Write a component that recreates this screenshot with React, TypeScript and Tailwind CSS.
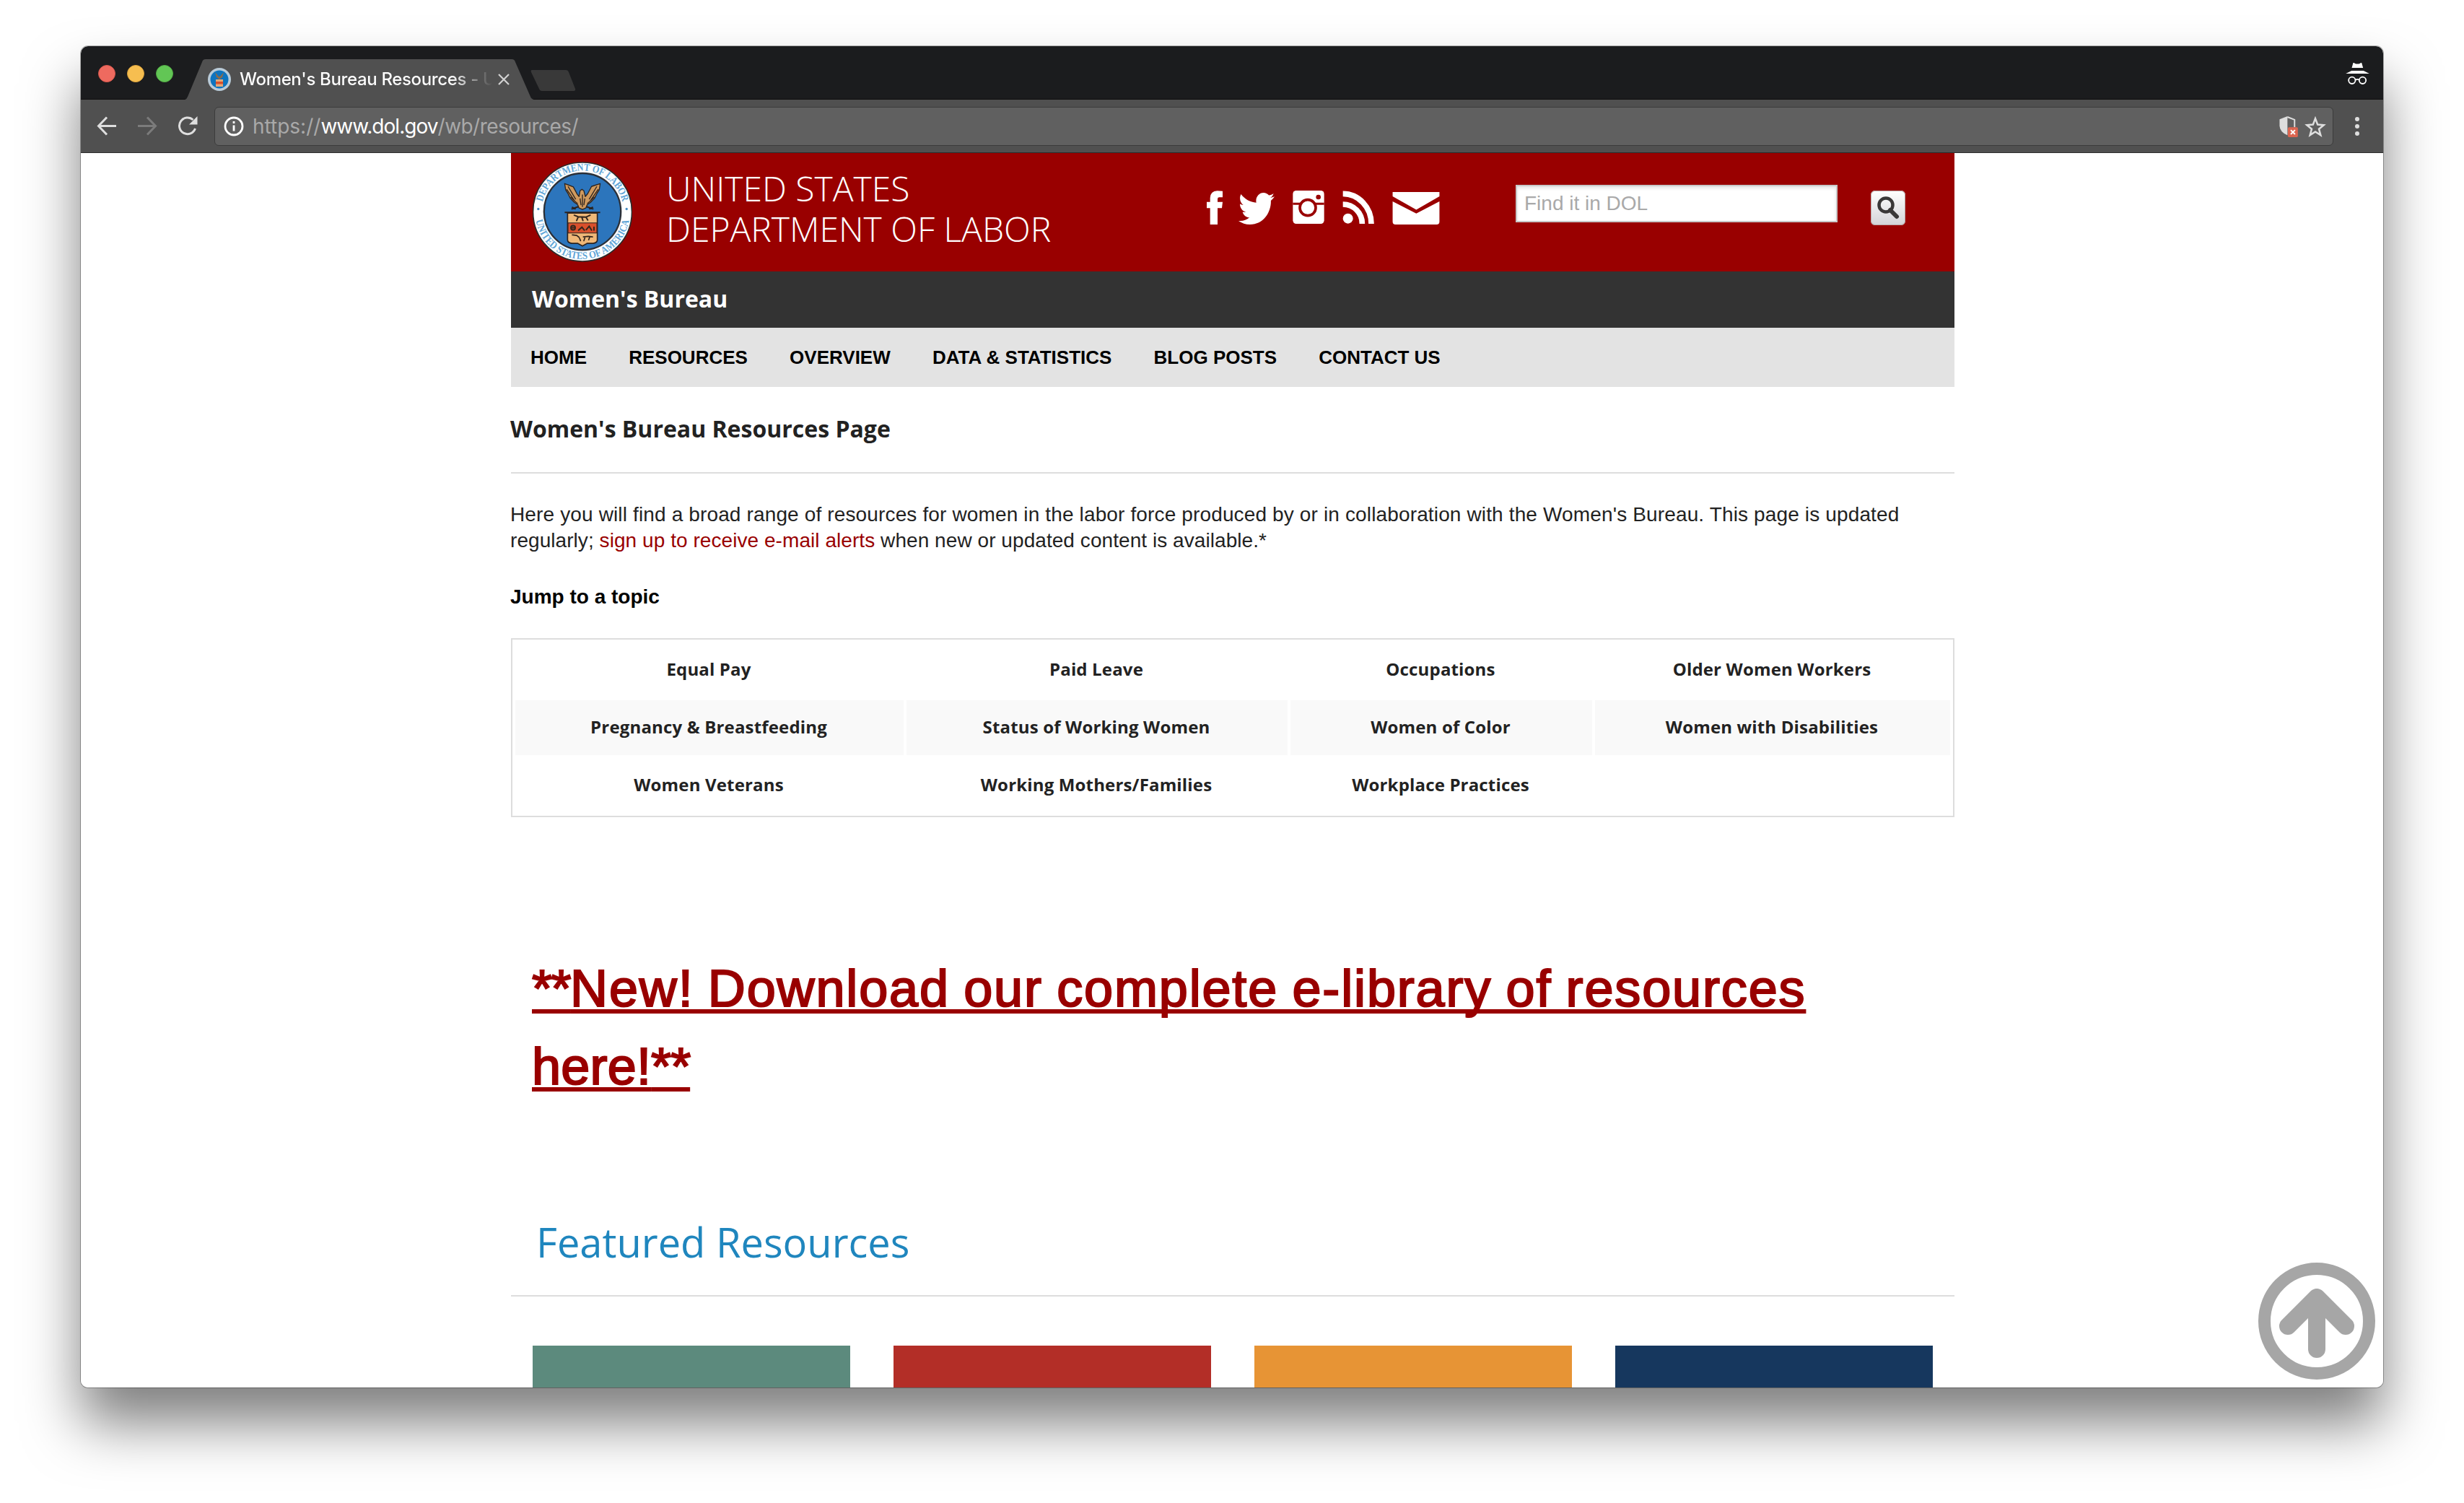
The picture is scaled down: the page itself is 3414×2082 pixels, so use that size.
import React from "react";
import { FaTwitter } from "react-icons/fa";

/* ---------- Department of Labor seal ---------- */

function Seal() {
  return (
    <svg viewBox="57 43 414 418" className="h-[139px] w-[138px] shrink-0" aria-label="Department of Labor seal">
      <defs>
        <path id="ring-top" d="M 93 251 A 171 171 0 0 1 435 251" />
        <path id="ring-bottom" d="M 66 251 A 198 198 0 0 0 462 251" />
      </defs>
      <circle cx="264" cy="252" r="206" fill="#fff" stroke="#2b2b2b" strokeWidth="5" />
      <circle cx="264" cy="251" r="160" fill="#2c75bc" stroke="#2b3038" strokeWidth="7" />
      <g fill="#5fa5d7" fontFamily="Liberation Serif, serif" fontWeight="700" fontSize="43">
        <text textLength="456" lengthAdjust="spacingAndGlyphs">
          <textPath href="#ring-top" startOffset="50%" textAnchor="middle">
            DEPARTMENT OF LABOR
          </textPath>
        </text>
        <text textLength="548" lengthAdjust="spacingAndGlyphs">
          <textPath href="#ring-bottom" startOffset="50%" textAnchor="middle">
            UNITED STATES OF AMERICA
          </textPath>
        </text>
      </g>
      <circle cx="80" cy="240" r="5" fill="#4a8fc6" />
      <circle cx="448" cy="240" r="5" fill="#4a8fc6" />
      {/* eagle */}
      <g stroke="#2b2320" strokeWidth="4" strokeLinejoin="round">
        <path
          d="M190 134 L226 148 L242 178 L250 188 L254 164 L262 158 L270 164 L276 188 L286 176 L302 146 L338 134 L334 160 L324 176 L314 196 L298 212 L284 222 L278 236 L264 242 L250 236 L244 222 L230 212 L214 196 L204 176 L194 160 Z"
          fill="#cf9a5e"
        />
        <path d="M204 146 L236 200 M198 158 L230 204 M214 190 L244 218 M324 146 L292 200 M330 158 L298 204 M314 190 L284 218 M264 180 V232 M254 196 L258 224 M274 196 L270 224" fill="none" strokeWidth="4" />
        <path d="M218 240 L248 230 M220 232 L236 240 M280 230 L310 240 M308 232 L292 240" fill="none" strokeWidth="6" />
      </g>
      {/* shield */}
      <path d="M190 254 H338" stroke="#2b2320" strokeWidth="6" />
      <path d="M202 257 H326 V370 Q324 382 308 383 H284 L264 394 L244 383 H220 Q204 382 202 370 Z" fill="#efb878" stroke="#2b2320" strokeWidth="5" />
      <rect x="204" y="298" width="120" height="42" fill="#d9502c" stroke="#2b2320" strokeWidth="3" />
      <g stroke="#33261d" fill="none" strokeWidth="6" strokeLinecap="round">
        <path d="M230 266 L246 272 L278 274 L296 266 M246 274 L240 288 M262 276 L266 288 M280 276 L286 286" />
        <circle cx="225" cy="318" r="9" />
        <path d="M221 318 H229 M248 328 L262 316 L272 328 M280 326 L292 312 L302 328 M312 316 V328" />
        <path d="M222 348 L240 350 L250 358 M252 362 L256 372 M268 356 L288 354 L306 356 M274 360 L270 372 M294 358 L290 368" strokeWidth="5" />
      </g>
    </svg>
  );
}

/* ---------- Browser chrome ---------- */

function Favicon() {
  return (
    <svg viewBox="0 0 32 32" className="size-8 shrink-0">
      <circle cx="16" cy="16" r="16" fill="#b9cbd8" />
      <circle cx="16" cy="16" r="12.5" fill="#0d74bf" />
      <path d="M10 6 L15 12 H17 L22 6 L20 13 L16 16 L12 13 Z" fill="#8a6a4a" />
      <path d="M11 16 H21 V26 H11 Z" fill="#e0a878" />
      <path d="M11 19 H21 V22.500 H11 Z" fill="#d9502c" />
    </svg>
  );
}

function TabStrip() {
  return (
    <div className="flex h-[74px] items-end bg-[#1b1c1e] shadow-[inset_0_-1px_0_#0e0e0e]">
      <div className="flex h-full items-center gap-4 pt-0.5 pl-6">
        <span className="size-6 rounded-full border border-[#d8564c] bg-[#ee6a5f]" />
        <span className="size-6 rounded-full border border-[#dba23c] bg-[#f6be50]" />
        <span className="size-6 rounded-full border border-[#52ab45] bg-[#62c655]" />
      </div>
      <div className="relative ml-[16px] h-14 w-[484px]">
        <svg viewBox="0 0 484 56" className="absolute inset-0 h-14 w-[484px]">
          <path d="M0 56 Q3 55 4 52 L24 4 Q25 0 29 0 H453 Q457 0 458 4 L479 52 Q480 55 484 56 Z" fill="#505050" />
        </svg>
        <div className="relative flex h-14 items-center pl-[32px]">
          <Favicon />
          <div className="ml-3 w-[350px] overflow-hidden whitespace-nowrap bg-gradient-to-r from-white from-84% to-[#505050] to-100% bg-clip-text font-['Inter'] text-2xl font-medium tracking-[-0.35px] text-transparent">
            Women's Bureau Resources - U
          </div>
          <svg viewBox="0 0 16 16" className="ml-2 size-4 shrink-0" stroke="#d2d2d2" strokeWidth="2.2">
            <path d="M1 1 L15 15 M15 1 L1 15" />
          </svg>
        </div>
      </div>
      <svg viewBox="0 0 64 30" className="mb-[11px] ml-[-5px] h-[30px] w-16">
        <path d="M2 0 H49 Q52 0 53 3 L62 26 Q63 29 60 29 H16 Q13 29 12 26 L1 3 Q0 0 2 0 Z" fill="#393939" />
      </svg>
      <svg viewBox="0 0 98 90" className="mr-[19px] mb-[21px] ml-auto h-[30px] w-[33px]" fill="#fff">
        <path d="M31 0 Q34 -1 37 2 Q48 7 60 2 Q63 -1 66 0 L72 21 H25 Z" />
        <path d="M0 45 L24 33 H74 L98 45 Z" />
        <g fill="none" stroke="#fff" strokeWidth="5.500">
          <circle cx="26" cy="73" r="14" />
          <circle cx="70" cy="73" r="14" />
          <path d="M40 71 Q48 66 56 71" />
        </g>
      </svg>
    </div>
  );
}

function Toolbar() {
  return (
    <div className="flex h-[74px] items-center bg-[#505050] shadow-[inset_0_-1px_0_#2c2c2c]">
      <svg viewBox="0 0 28 28" className="ml-[22px] size-7" fill="none" stroke="#dedede" strokeWidth="3">
        <path d="M27 13.500 H3 M14 1.500 L2.500 13.500 L14 25.500" />
      </svg>
      <svg viewBox="0 0 28 28" className="ml-[28px] size-7" fill="none" stroke="#7b7b7b" strokeWidth="3">
        <path d="M1 13.500 H25 M14 1.500 L25.500 13.500 L14 25.500" />
      </svg>
      <svg viewBox="0 0 28 28" className="ml-[28px] size-7" fill="none" stroke="#dedede" strokeWidth="3">
        <path d="M21.500 5 A11.300 11.300 0 1 0 24.500 17" />
        <path d="M27.500 0 V11.500 H16 Z" fill="#dedede" stroke="none" />
      </svg>
      <div className="ml-[23px] flex h-[54px] w-[2936px] items-center rounded-md border border-[#3c3c3c] bg-[#606060]">
        <svg viewBox="0 0 28 28" className="ml-[12px] size-7" fill="none" stroke="#fff" strokeWidth="2.800">
          <circle cx="14" cy="14" r="12" />
          <path d="M14 12.500 V20.500 M14 7 V10" />
        </svg>
        <div className="ml-[12px] flex font-['Inter'] text-[28px] text-[#a9a9a9]">
          <span>https://</span>
          <span className="tracking-[-0.95px] text-white">www.dol.gov</span>
          <span className="tracking-[-0.55px]">/wb/resources/</span>
        </div>
        <svg viewBox="0 0 78 88" className="mr-[9px] ml-auto h-[29px] w-[26px]">
          <path d="M34 0 V80 Q2 66 1 40 V13 Z" fill="#dedede" />
          <path d="M34 3 L64 15 V46" fill="none" stroke="#dedede" strokeWidth="6" />
          <rect x="36" y="46" width="42" height="42" rx="5" fill="#dc6550" />
          <path d="M48 58 L66 76 M66 58 L48 76" stroke="#fff" strokeWidth="6" />
        </svg>
        <svg viewBox="0 0 90 86" className="mr-[9px] h-[29px] w-[30px]" fill="none" stroke="#dedede" strokeWidth="7.500">
          <path d="M45 9 L54.500 34 L80 36 L60 52.500 L67 78 L45 64 L23 78 L30 52.500 L10 36 L35.500 34 Z" />
        </svg>
      </div>
      <div className="ml-[30px] flex flex-col gap-1">
        <span className="size-1.5 rounded-full bg-[#dedede]" />
        <span className="size-1.5 rounded-full bg-[#dedede]" />
        <span className="size-1.5 rounded-full bg-[#dedede]" />
      </div>
    </div>
  );
}

/* ---------- Site header ---------- */

function SocialLinks() {
  return (
    <div className="mt-[52px] flex h-[50px] items-start text-white">
      <svg viewBox="96 103 66 141" className="h-[47px] w-[22px]" fill="#fff">
        <path d="M162 105 V131 H148 Q141 131 141 138 V150 H162 L159 176 H141 V244 H110 V176 H96 V150 H110 V134 Q111 105 140 104 Z" />
      </svg>
      <FaTwitter className="-mt-[2px] ml-[22px] h-[54px] w-[50px]" preserveAspectRatio="none" />
      <svg viewBox="456 103 130 138" className="ml-[25px] h-[46px] w-[44px]">
        <rect x="456" y="103" width="130" height="138" rx="14" fill="#fff" />
        <path d="M456 158 H586" stroke="#990000" strokeWidth="9" />
        <circle cx="518" cy="174" r="33" fill="#fff" stroke="#990000" strokeWidth="11" />
        <circle cx="562" cy="130" r="10" fill="#990000" />
      </svg>
      <svg viewBox="662 103 132 138" className="ml-[25px] h-[46px] w-[44px]" fill="none" stroke="#fff" strokeWidth="23">
        <circle cx="685" cy="219" r="21" fill="#fff" stroke="none" />
        <path d="M664 160 A80 80 0 0 1 744 241 M664 116 A118 125 0 0 1 782 241" />
      </svg>
      <svg viewBox="869 108 196 136" className="mt-[2px] ml-[25px] h-[45px] w-[66px]" fill="#fff">
        <path d="M869 108 H1065 V126 L968 182 L869 126 Z" />
        <path d="M869 147 L968 198 L1065 147 V232 Q1065 244 1053 244 H881 Q869 244 869 232 Z" />
      </svg>
    </div>
  );
}

function SiteHeader() {
  return (
    <header>
      <div className="flex h-[164px] items-start bg-[#990000]">
        <div className="mt-3 ml-[30px]">
          <Seal />
        </div>
        <h1 className="mt-[21px] ml-[47px] w-[749px] text-5xl leading-[56px] font-light text-white">
          UNITED STATES
          <br />
          DEPARTMENT OF LABOR
        </h1>
        <SocialLinks />
        <div className="mt-11 ml-[105px] flex h-[52px] w-[446px] items-center border-2 border-[#c8c8c8] bg-white pl-[10px] font-['Liberation_Sans'] text-[28px] text-[#a9a9a9] shadow-[inset_0_3px_4px_#e6e6e6]">
          Find it in DOL
        </div>
        <div className="mt-[52px] ml-[46px] flex h-[48px] w-[48px] items-center justify-center rounded-md bg-gradient-to-b from-white to-[#d4d4d8] shadow-[inset_0_0_0_1px_#b9a8a8]">
          <svg viewBox="0 0 32 32" className="size-8" fill="none" stroke="#3a3838">
            <circle cx="13" cy="12" r="9.500" strokeWidth="4.500" />
            <path d="M19 19 L28 28" strokeWidth="6" strokeLinecap="round" />
          </svg>
        </div>
      </div>
      <div className="flex h-[78px] items-center bg-[#333] pb-[3px] pl-[29px] text-[32px] font-bold text-white">Women's Bureau</div>
      <nav className="flex h-[82px] items-center gap-[58.2px] bg-[#e3e3e3] pl-[27px] font-['Liberation_Sans'] text-[26px] font-bold text-black">
        {["HOME", "RESOURCES", "OVERVIEW", "DATA & STATISTICS", "BLOG POSTS", "CONTACT US"].map((item) => (
          <a key={item}>{item}</a>
        ))}
      </nav>
    </header>
  );
}

/* ---------- Page content ---------- */

const topics = [
  ["Equal Pay", "Paid Leave", "Occupations", "Older Women Workers"],
  ["Pregnancy & Breastfeeding", "Status of Working Women", "Women of Color", "Women with Disabilities"],
  ["Women Veterans", "Working Mothers/Families", "Workplace Practices", ""],
];

function Topics() {
  return (
    <div className="mt-[39px] grid grid-cols-[538px_528px_418px_492px] gap-1 border-2 border-[#ddd] p-1 text-2xl font-bold text-[#222]">
      {topics.map((row, r) =>
        row.map((topic, c) => (
          <div key={`${r}-${c}`} className={`flex h-[76px] items-center justify-center pr-[2px] pb-[3px] tracking-[0.16px] ${r === 1 ? "bg-[#f9f9f9]" : ""}`}>
            {topic}
          </div>
        )),
      )}
    </div>
  );
}

const cardColors = ["bg-[#5c8a7d]", "bg-[#b32e27]", "bg-[#e79435]", "bg-[#16375e]"];

function Page() {
  return (
    <main className="ml-[596px] w-[2000px] font-['Open_Sans',sans-serif]">
      <SiteHeader />
      <h2 className="-ml-px mt-[34px] text-[32px] leading-[48px] font-bold text-[#222]">Women's Bureau Resources Page</h2>
      <hr className="mt-9 border-t-2 border-[#ddd]" />
      <p className="-ml-px mt-[39px] font-['Liberation_Sans'] text-[28px] leading-9 whitespace-nowrap text-[#222]">
        <span className="tracking-[0.14px]">
          Here you will find a broad range of resources for women in the labor force produced by or in collaboration with the Women's Bureau. This page is updated
        </span>
        <br />
        <span className="tracking-[0.06px]">
          regularly; <a className="text-[#990000]">sign up to receive e-mail alerts</a> when new or updated content is available.*
        </span>
      </p>
      <p className="-ml-px mt-[42px] font-['Liberation_Sans'] text-[28px] leading-9 font-bold text-black">Jump to a topic</p>
      <Topics />
      <div className="mt-[183px] ml-[29px] font-['Liberation_Sans'] text-[72px] leading-[108px] whitespace-nowrap text-[#990000]">
        <a className="tracking-[1.85px] underline decoration-[6px] underline-offset-[4px] [-webkit-text-stroke:2.2px_#990000] [text-decoration-skip-ink:none] [word-spacing:-2.5px]">
          <span className="tracking-[-1.5px]">**</span>New! Download our complete e-library of resources
          <br />
          <span className="tracking-[0.2px]">here!</span>
          <span className="tracking-[-1px]">**</span>
        </a>
      </div>
      <h3 className="mt-[151px] ml-[35px] text-[56px] leading-[76px] text-[#1f86be]">Featured Resources</h3>
      <hr className="mt-9 border-t-2 border-[#ddd]" />
      <div className="mt-[68px] ml-[30px] grid grid-cols-4 gap-[60px] pr-[30px]">
        {cardColors.map((color) => (
          <div key={color} className={`h-[58px] ${color}`} />
        ))}
      </div>
    </main>
  );
}

function BackToTop() {
  return (
    <svg viewBox="0 0 162 162" className="absolute right-[11px] bottom-[11px] size-[162px]" fill="none" stroke="#a6a6a6" strokeLinecap="round" strokeLinejoin="round">
      <circle cx="81" cy="81" r="72.500" strokeWidth="17" />
      <path d="M41 88 L81 48 L121 88 M81 48 V120" strokeWidth="24" />
    </svg>
  );
}

export default function App() {
  return (
    <div className="h-[2082px] w-[3414px] overflow-hidden bg-white pt-16 pl-28">
      <div className="relative h-[1858px] w-[3190px] rounded-[10px] shadow-[0_0_0_1px_rgba(0,0,0,0.3),0_50px_78px_rgba(0,0,0,0.5)]">
        <div className="h-full overflow-hidden rounded-[10px] bg-white">
          <TabStrip />
          <Toolbar />
          <Page />
        </div>
        <BackToTop />
      </div>
    </div>
  );
}
